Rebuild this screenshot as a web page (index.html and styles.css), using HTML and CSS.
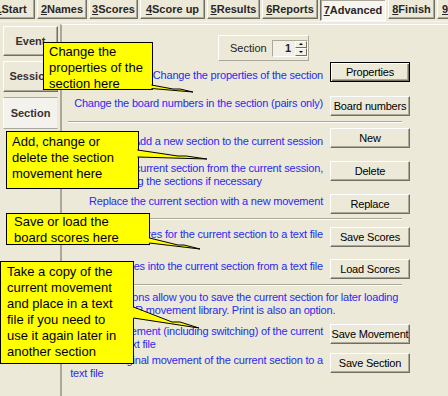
FILE: index.html
```html
<!DOCTYPE html>
<html>
<head>
<meta charset="utf-8">
<title>Advanced - Section</title>
<link rel="stylesheet" href="styles.css">
</head>
<body>
<div class="screen">
    <div class="tabs">
        <span class="tab"><u>1</u>Start</span>
        <span class="tab"><u>2</u>Names</span>
        <span class="tab"><u>3</u>Scores</span>
        <span class="tab"><u>4</u>Score up</span>
        <span class="tab"><u>5</u>Results</span>
        <span class="tab"><u>6</u>Reports</span>
        <span class="tab active"><u>7</u>Advanced</span>
        <span class="tab"><u>8</u>Finish</span>
        <span class="tab"><u>9</u>Help</span>
    </div>

    <div class="main">
        <div class="side">
            <div class="side-tab event">Event</div>
            <div class="side-tab session">Session</div>
            <div class="side-tab section active">Section</div>
        </div>

        <div class="panel">
            <div class="section-bar">
                <span>Section</span>
                <span class="spin">
                    <span class="spin-val">1</span>
                    <span class="spin-btns"><i class="up"></i><i class="down"></i></span>
                </span>
            </div>

            <div class="row row-props">
                <span class="label low">Change the properties of the section</span>
                <button class="btn default">Properties</button>
            </div>
            <div class="row row-board">
                <span class="label">Change the board numbers in the section (pairs only)</span>
                <button class="btn">Board numbers</button>
            </div>

            <div class="sep sep-1"></div>

            <div class="row row-new">
                <span class="label low">Add a new section to the current session</span>
                <button class="btn">New</button>
            </div>
            <div class="row row-delete">
                <span class="label">Delete the current section from the current session,<br>renumbering the sections if necessary</span>
                <button class="btn">Delete</button>
            </div>
            <div class="row row-replace">
                <span class="label">Replace the current section with a new movement</span>
                <button class="btn">Replace</button>
            </div>

            <div class="sep sep-2"></div>

            <div class="row row-save-scores">
                <span class="label">Save the scores for the current section to a text file</span>
                <button class="btn">Save Scores</button>
            </div>
            <div class="row row-load-scores">
                <span class="label">Load the scores into the current section from a text file</span>
                <button class="btn">Load Scores</button>
            </div>

            <div class="sep sep-3"></div>

            <p class="note">These options allow you to save the current section for later loading<br>into the SCR movement library. Print is also an option.</p>

            <div class="row row-save-move">
                <span class="label">Save the movement (including switching) of the current<br>section to a text file</span>
                <button class="btn">Save Movement</button>
            </div>
            <div class="row row-save-section">
                <span class="label">Save the original movement of the current section to a<br>text file</span>
                <button class="btn">Save Section</button>
            </div>
        </div>
    </div>

    <!-- hint balloons -->
    <div class="callout c1">Change the<br>properties of the<br>section here</div>
    <div class="callout c2">Add, change or<br>delete the section<br>movement here</div>
    <div class="callout c3">Save or load the<br>board scores here</div>
    <div class="callout c4">Take a copy of the<br>current movement<br>and place in a text<br>file if you need to<br>use it again later in<br>another section</div>

    <svg class="tails" width="448" height="396" viewBox="0 0 448 396">
        <polygon class="tail-fill" points="150,85 173,89 180,89 193,92 150,89"/>
        <polyline class="tail-line" points="151.5,85 173,89 180,89 193,92 151.5,88.5"/>

        <polygon class="tail-fill" points="136,150 178,156 186,156 207,159 136,157"/>
        <polyline class="tail-line" points="137.5,150 178,156 186,156 207,159 137.5,157"/>

        <polygon class="tail-fill" points="148,238 178,245 184,245 200,249 148,243"/>
        <polyline class="tail-line" points="149.5,238 178,245 184,245 200,249 149.5,243"/>

        <polygon class="tail-fill" points="132,307 172,322 180,322 199,328 132,318"/>
        <polyline class="tail-line" points="133.5,307 172,322 180,322 199,328 133.5,318"/>
    </svg>
</div>
</body>
</html>
```

FILE: styles.css
```css
html, body {
    margin: 0;
    padding: 0;
}

body {
    width: 448px;
    height: 396px;
    overflow: hidden;
    background: #ece9d8;
    color: #000;
    font: 11px/13px "Liberation Sans", Arial, sans-serif;
}

p {
    margin: 0;
}

.screen {
    position: relative;
    width: 448px;
    height: 396px;
    overflow: hidden;
}

/* top tab strip */
.tabs {
    display: flex;
    gap: 2px;
    height: 20px;
    margin: -1px 0 0 -13px;
    white-space: nowrap;
}

.tab {
    flex: none;
    box-sizing: border-box;
    height: 20px;
    border: 1px solid;
    border-color: #fff #716f64 #716f64 #fff;
    box-shadow: inset -1px -1px #aca899;
    color: #2b2626;
    font-weight: bold;
    line-height: 18px;
    text-align: center;
}

.tab:nth-child(1) { width: 48px; }
.tab:nth-child(2) { width: 50px; }
.tab:nth-child(3) { width: 49px; }
.tab:nth-child(4) { width: 65px; }
.tab:nth-child(5) { width: 53px; }
.tab:nth-child(6) { width: 56px; }
.tab:nth-child(7) { width: 66px; }
.tab:nth-child(8) { width: 47px; }
.tab:nth-child(9) { width: 40px; }

.tab.active {
    height: 22px;
    background: #f6f5ef;
    border-color: #716f64 #fff #fff #716f64;
    box-shadow: inset 1px 1px #aca899;
    line-height: 20px;
}

/* body */
.main {
    display: flex;
    height: 374px;
    margin-top: 2px;
    border-top: 1px solid #f6f5ef;
}

.side {
    flex: none;
    width: 60px;
    padding-top: 4px;
    box-sizing: border-box;
}

.side-tab {
    box-sizing: border-box;
    margin: 0 2px 5px 3px;
    height: 30px;
    border: 1px solid;
    border-color: #fff #716f64 #716f64 #fff;
    box-shadow: inset -1px -1px #aca899;
    display: flex;
    align-items: center;
    justify-content: center;
    color: #3a3030;
    font-weight: bold;
}

.side-tab.session {
    height: 31px;
}

.side-tab.section {
    height: 32px;
}

.side-tab.active {
    background: #f3f2ec;
    border-color: #aca899 #ece9d8 #aca899 #fff;
    box-shadow: none;
}

.panel {
    flex: 1;
    margin-top: 2px;
    border-top: 1px solid #fff;
    border-left: 2px solid #aca899;
}

/* section selector */
.section-bar {
    display: flex;
    align-items: center;
    gap: 5px;
    box-sizing: border-box;
    width: 91px;
    height: 26px;
    margin: 10px 0 0 156px;
    padding-left: 11px;
    border: 1px solid;
    border-color: #fff #aca899 #aca899 #fff;
    color: #222;
}

.spin {
    display: flex;
    box-sizing: border-box;
    width: 38px;
    height: 17px;
    border: 1px solid;
    border-color: #aca899 #fff #fff #aca899;
    background: #f1efe6;
}

.spin-val {
    flex: 1;
    padding-right: 4px;
    font-weight: bold;
    line-height: 15px;
    text-align: right;
}

.spin-btns {
    display: flex;
    flex-direction: column;
    width: 12px;
}

.spin-btns i {
    flex: 1;
    display: flex;
    align-items: center;
    justify-content: center;
    border: 1px solid;
    border-color: #fff #716f64 #716f64 #fff;
}

.spin-btns i::after {
    content: "";
    border-left: 2px solid transparent;
    border-right: 2px solid transparent;
}

.spin-btns .up::after {
    border-bottom: 2px solid #000;
}

.spin-btns .down::after {
    border-top: 2px solid #000;
}

/* option rows */
.row {
    display: flex;
    justify-content: flex-end;
    width: 348px;
    height: 20px;
}

.label {
    margin-right: 7px;
    padding-top: 1px;
    color: #2a2af2;
    letter-spacing: -0.2px;
    white-space: nowrap;
}

.label.low {
    padding-top: 7px;
}

.btn {
    flex: none;
    box-sizing: border-box;
    width: 80px;
    height: 20px;
    padding: 0;
    background: #ece9d8;
    border: 1px solid;
    border-color: #fff #716f64 #716f64 #fff;
    box-shadow: inset -1px -1px #aca899;
    color: #000;
    font: 11px/13px "Liberation Sans", Arial, sans-serif;
    letter-spacing: -0.2px;
}

.btn.default {
    border-color: #000;
    box-shadow: inset 1px 1px #fff, inset -1px -1px #716f64, inset -2px -2px #aca899;
}

.row-props { margin-top: 1px; }
.row-board { margin-top: 14px; }
.row-new { margin-top: 5px; }
.row-delete { margin-top: 13px; }
.row-replace { margin-top: 13px; }
.row-save-scores { margin-top: 7px; }
.row-load-scores { margin-top: 12px; }
.row-save-move { margin-top: 7px; }
.row-save-section { margin-top: 9px; }

.sep {
    width: 334px;
    height: 0;
    margin-left: 6px;
    border-top: 1px solid #aca899;
    border-bottom: 1px solid #fff;
}

.sep-1 { margin-top: 5px; }
.sep-2 { margin-top: 4px; }
.sep-3 { margin-top: 5px; }

.note {
    margin: 5px 0 0 21px;
    color: #2a2af2;
    letter-spacing: -0.2px;
    white-space: nowrap;
}

/* yellow hint balloons */
.callout {
    position: absolute;
    box-sizing: border-box;
    padding: 1px 5px;
    background: #ffff00;
    border: 1px solid #000;
    color: #000;
    font: 13px/16px "Liberation Sans", Arial, sans-serif;
    white-space: nowrap;
}

.c1 {
    left: 43px;
    top: 42px;
    width: 110px;
    height: 48px;
}

.c2 {
    left: 6px;
    top: 131px;
    width: 133px;
    height: 58px;
    padding-top: 2px;
}

.c3 {
    left: 6px;
    top: 213px;
    width: 144px;
    height: 32px;
    padding-top: 0;
    padding-left: 7px;
}

.c4 {
    left: 0;
    top: 261px;
    width: 134px;
    height: 103px;
    padding: 2px 6px;
}

.tails {
    position: absolute;
    top: 0;
    left: 0;
    pointer-events: none;
}

.tail-fill {
    fill: #ffff00;
}

.tail-line {
    fill: none;
    stroke: #000;
    stroke-width: 1;
}
```
